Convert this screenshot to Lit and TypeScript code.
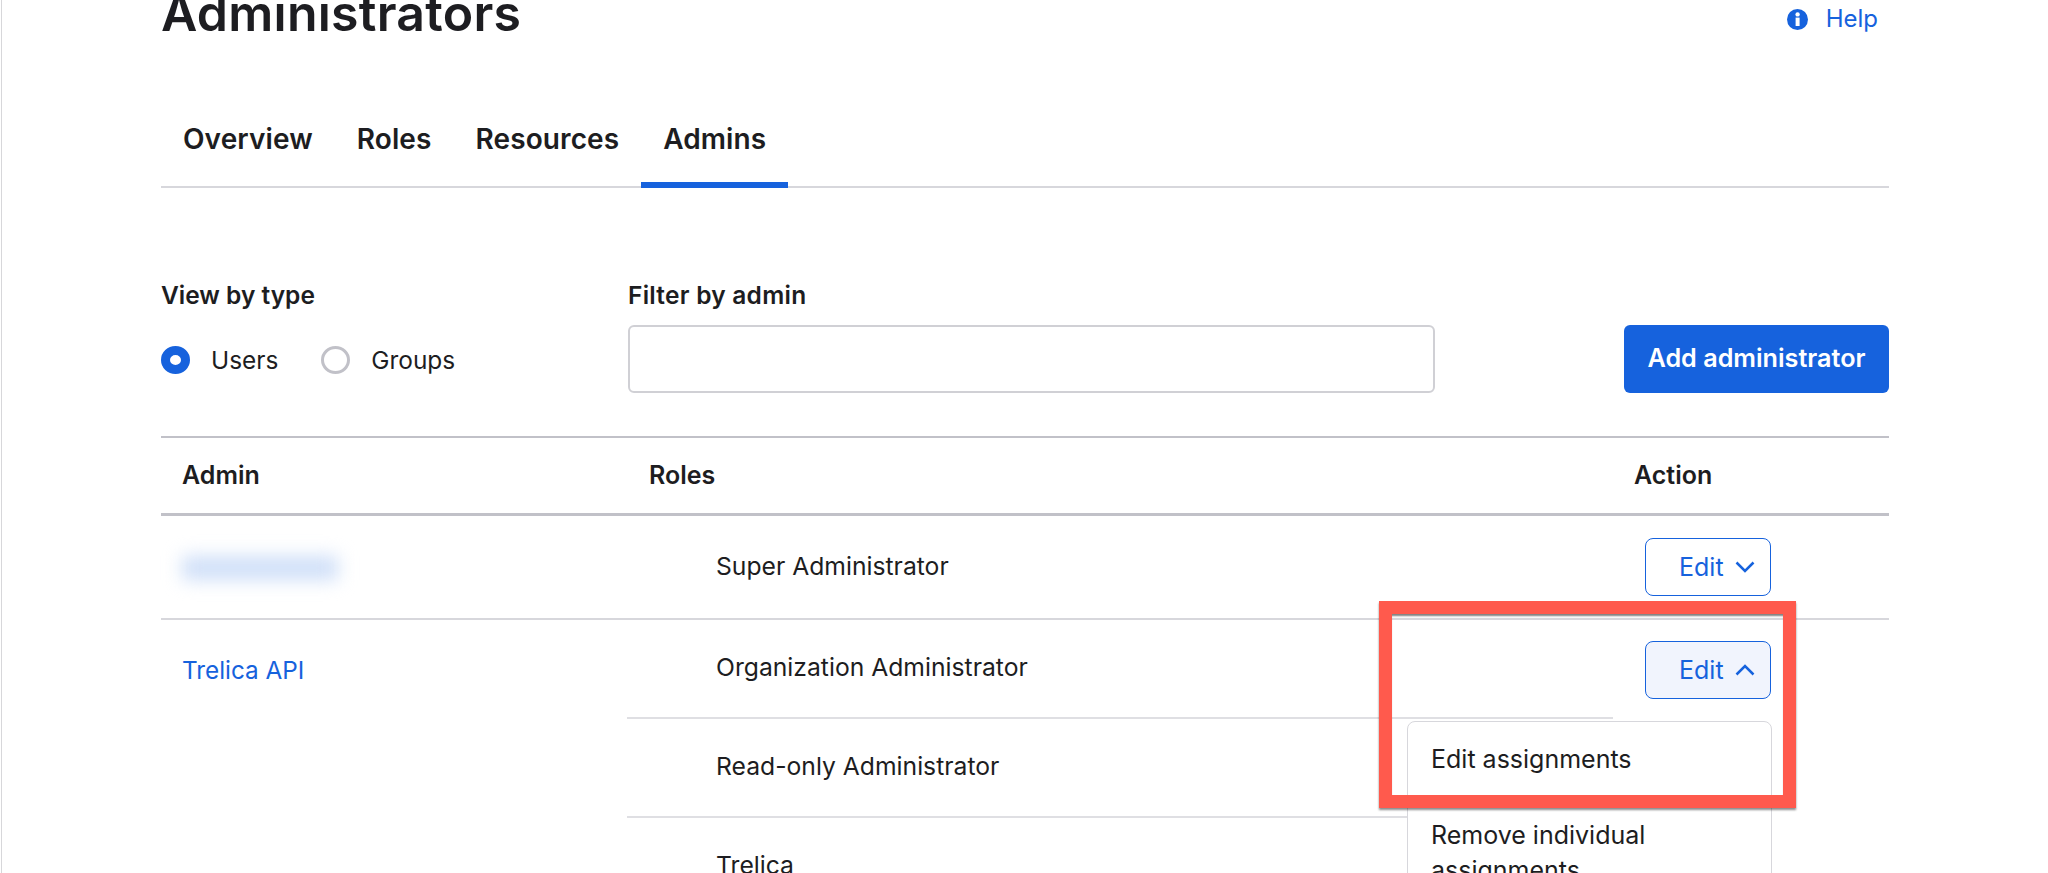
import { LitElement, html, css } from "lit";
import { customElement } from "lit/decorators.js";

const chevronDown = html`<svg class="chev" viewBox="0 0 20 12" fill="none" stroke="currentColor" stroke-width="2.5"><path d="M1.5 1.5 10 10l8.5-8.5"/></svg>`;
const chevronUp = html`<svg class="chev" viewBox="0 0 20 12" fill="none" stroke="currentColor" stroke-width="2.5"><path d="M1.5 10.5 10 2l8.5 8.5"/></svg>`;

@customElement("app-root")
export class AppRoot extends LitElement {
  static styles = css`
    :host { display: block; height: 873px; overflow: hidden; background: #fff; color: #1d1d21; font-family: Inter, "Noto Sans", sans-serif; font-size: 24px; }
    * { box-sizing: border-box; }
    .page { position: relative; margin: -31px 0 0 1px; padding: 0 159px; border-left: 1px solid #d7d7da; height: 960px; }
    .head { display: flex; justify-content: space-between; height: 90px; }
    h1 { margin: 0; font-size: 50px; line-height: 88px; font-weight: 600; letter-spacing: 0.25px; }
    .help { display: flex; align-items: center; gap: 18px; height: 40px; margin: 30px 11px 0 0; color: #1662dd; line-height: 40px; }
    .help svg { width: 21px; height: 21px; }
    .tabs { display: flex; border-bottom: 2px solid #d7d7dc; height: 129px; align-items: flex-end; }
    .tab { padding: 0 22px; height: 65px; font-weight: 600; line-height: 36px; font-size: 28px; letter-spacing: 0.1px; }
    .tab.on { height: 67px; margin-bottom: -2px; box-shadow: inset 0 -6px 0 #1662dd; }
    .filters { display: flex; margin-top: 92px; height: 156px; }
    .type { width: 467px; }
    .label { font-weight: 600; line-height: 30px; font-size: 24.5px; }
    .filter .label { letter-spacing: 0.25px; }
    .radios { display: flex; align-items: center; margin-top: 36px; height: 28px; font-size: 24.4px; }
    .radio { width: 29px; height: 28px; border-radius: 50%; }
    .radio.on { border: 9px solid #1662dd; }
    .radio.off { border: 3px solid #c1c1c8; margin-left: 43px; }
    .radios span { margin-left: 21px; }
    .filter { width: 807px; }
    .input { height: 68px; margin-top: 15px; border: 2px solid #d0d0d5; border-radius: 6px; }
    .add { margin: 45px 0 0 auto; width: 265px; height: 68px; background: #1662dd; color: #fff; border-radius: 6px; font-weight: 600; font-size: 25.2px; display: flex; align-items: center; justify-content: center; padding-bottom: 2px; }
    .row { display: flex; }
    .thead { height: 80px; border-top: 2px solid #c1c1c8; border-bottom: 3px solid #c1c1c8; font-weight: 600; font-size: 25px; align-items: center; padding-bottom: 2px; }
    .c1 { width: 466px; padding-left: 21px; }
    .c2 { width: 986px; padding-left: 22px; }
    .c3 { padding-left: 21px; }
    .body1 { height: 104px; border-bottom: 2px solid #d7d7dc; }
    .body1 .c1 { padding-top: 40px; }
    .blur { width: 156px; height: 24px; background: #cfdff8; filter: blur(9px); }
    .body2 .c1 { color: #1662dd; padding-top: 32px; line-height: 36px; font-size: 24.3px; }
    .cell { padding-left: 0; }
    .role { display: flex; align-items: center; height: 99px; padding-left: 89px; border-bottom: 2px solid #dfdfe3; padding-bottom: 4px; font-size: 24.7px; }
    .body1 .role { height: 102px; border: none; padding-bottom: 2px; }
    .action { padding: 22px 0 0 32px; }
    .edit { width: 126px; height: 58px; border: 1.5px solid #1662dd; border-radius: 8px; color: #1662dd; display: flex; align-items: center; padding-left: 33px; gap: 11px; font-size: 25px; }
    .edit.open { background: #f1f4fd; }
    .chev { width: 20px; height: 12px; }
    .body2 .action { padding-top: 21px; }
    .menu { position: absolute; left: 1405px; top: 752px; width: 365px; height: 200px; background: #fff; border: 1px solid #d7d7dc; border-radius: 8px; font-size: 25px; }
    .item { padding: 0 23px; line-height: 35px; }
    .item:first-child { margin-top: 20px; margin-bottom: 41px; }
    .note { position: absolute; left: 1377px; top: 632px; width: 417px; height: 207px; border: 13px solid #ff5a4d; box-shadow: 0 2px 2px rgba(0,0,0,.45), inset 0 3px 2px -1px rgba(0,0,0,.5); }
  `;

  render() {
    return html`<div class="page">
      <div class="head">
        <h1>Administrators</h1>
        <div class="help">
          <svg viewBox="0 0 21 21"><circle cx="10.5" cy="10.5" r="10.5" fill="#1662dd"/><rect x="8.6" y="8.6" width="4" height="8.4" fill="#fff"/><circle cx="10.6" cy="5.4" r="2.2" fill="#fff"/></svg>
          <span>Help</span>
        </div>
      </div>
      <div class="tabs">
        <div class="tab">Overview</div><div class="tab">Roles</div><div class="tab">Resources</div><div class="tab on">Admins</div>
      </div>
      <div class="filters">
        <div class="type">
          <div class="label">View by type</div>
          <div class="radios"><div class="radio on"></div><span>Users</span><div class="radio off"></div><span>Groups</span></div>
        </div>
        <div class="filter"><div class="label">Filter by admin</div><div class="input"></div></div>
        <div class="add">Add administrator</div>
      </div>
      <div class="row thead"><div class="c1">Admin</div><div class="c2">Roles</div><div class="c3">Action</div></div>
      <div class="row body1">
        <div class="c1"><div class="blur"></div></div>
        <div class="c2 cell"><div class="role">Super Administrator</div></div>
        <div class="action"><div class="edit">Edit ${chevronDown}</div></div>
      </div>
      <div class="row body2">
        <div class="c1">Trelica API</div>
        <div class="c2 cell">
          <div class="role">Organization Administrator</div>
          <div class="role">Read-only Administrator</div>
          <div class="role">Trelica</div>
        </div>
        <div class="action"><div class="edit open">Edit ${chevronUp}</div></div>
      </div>
      <div class="menu"><div class="item">Edit assignments</div><div class="item">Remove individual assignments</div></div>
      <div class="note"></div>
    </div>`;
  }
}
